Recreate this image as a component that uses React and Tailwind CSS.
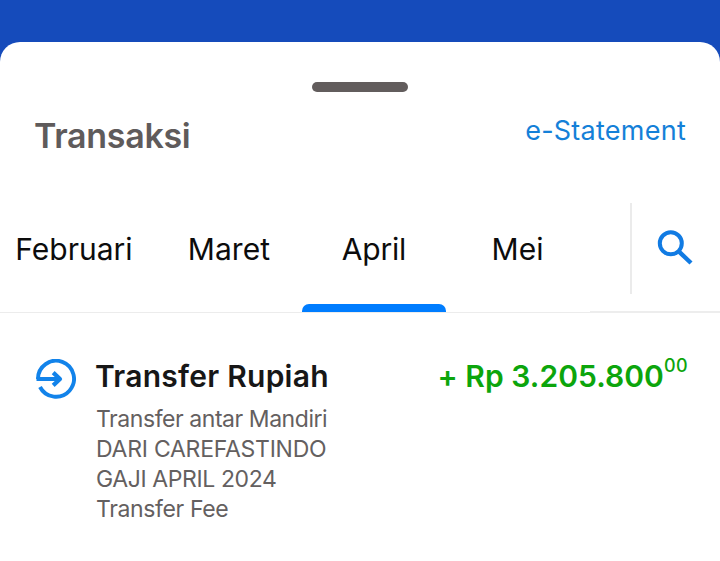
import React from 'react';

function TransferInIcon() {
    return (
        <svg className="w-10 h-10" viewBox="0 0 40 40" fill="none" stroke="#1283ea" strokeWidth="3.9">
            <path d="M2 20A18 18 0 1 1 4 28" />
            <path d="M0.5 20H24" strokeWidth="4" />
            <path d="M17.2 13.6L24 20L17.2 26.4" strokeWidth="4.2" strokeLinejoin="round" />
        </svg>
    )
}

function SearchIcon() {
    return (
        <svg className="w-[36px] h-[36px]" viewBox="0 0 36 36" fill="none" stroke="#117be3" strokeWidth="4">
            <circle cx="13.8" cy="13.3" r="11" />
            <path d="M21.5 21.2L34 33" strokeWidth="4.4" />
        </svg>
    )
}

function App() {
    return (
        <main className="w-[720px] h-[561px] bg-[#154bbb] pt-[42px] overflow-hidden font-['Inter',sans-serif] whitespace-nowrap">
            <div className="h-full bg-white rounded-t-[20px]">

                <div className="h-[50px] pt-10 flex justify-center">
                    <div className="w-24 h-[10px] rounded-full bg-[#625d5d]"></div>
                </div>

                <header className="h-[110px] pt-[24px] pl-[34px] pr-[34px] flex justify-between items-start">
                    <h1 className="text-[34px] leading-10 font-semibold text-[#5f5b5b] tracking-[-0.3px]">Transaksi</h1>
                    <a className="text-[27px] leading-[30px] text-[#1480d8] tracking-[0.25px]">e-Statement</a>
                </header>

                <nav className="h-[111px] flex text-[30px] leading-[40px] text-[#0c0c0c]">
                    <div className="flex-1 flex border-b border-[#ececec] text-center">
                        <div className="w-[168px] -ml-[10px] pt-[27px]">Februari</div>
                        <div className="w-36 pt-[27px] pr-[2px] tracking-[0.1px]">Maret</div>
                        <div className="w-36 pt-[27px] flex flex-col justify-between">
                            <span className="tracking-[-0.2px]">April</span>
                            <div className="h-2 rounded-t-[7px] bg-[#007dff]"></div>
                        </div>
                        <div className="w-36 pt-[27px] pr-px">Mei</div>
                    </div>
                    <div className="w-[130px] h-[111px] pl-10 border-b-2 border-[#ededed] flex">
                        <div className="w-[2px] h-[91px] mt-px bg-[#ebebeb]"></div>
                        <div className="pl-[25px] pt-[28px]">
                            <SearchIcon />
                        </div>
                    </div>
                </nav>

                <section className="pt-[46px] pl-9 pr-8 flex items-start">
                    <TransferInIcon />
                    <div className="ml-[19px] flex-1">
                        <h2 className="text-[30px] leading-[34px] font-semibold text-[#171717] tracking-[0.25px]">Transfer Rupiah</h2>
                        <div className="mt-[11px] ml-px text-[23px] leading-[30px] text-[#646060]">
                            <p className="tracking-[-0.44px]">Transfer antar Mandiri</p>
                            <p className="tracking-[-0.25px]">DARI CAREFASTINDO</p>
                            <p className="tracking-[-0.4px]">GAJI APRIL 2024</p>
                            <p className="tracking-[-0.36px]">Transfer Fee</p>
                        </div>
                    </div>
                    <div className="flex items-start text-[#0ca50c]">
                        <span className="text-[30px] leading-[34px] font-semibold tracking-[0.05px]">+ Rp 3.205.800</span>
                        <span className="text-[18px] leading-[13px] font-medium tracking-[0.4px]">00</span>
                    </div>
                </section>
            </div>
        </main>
    )
}

export default App;
